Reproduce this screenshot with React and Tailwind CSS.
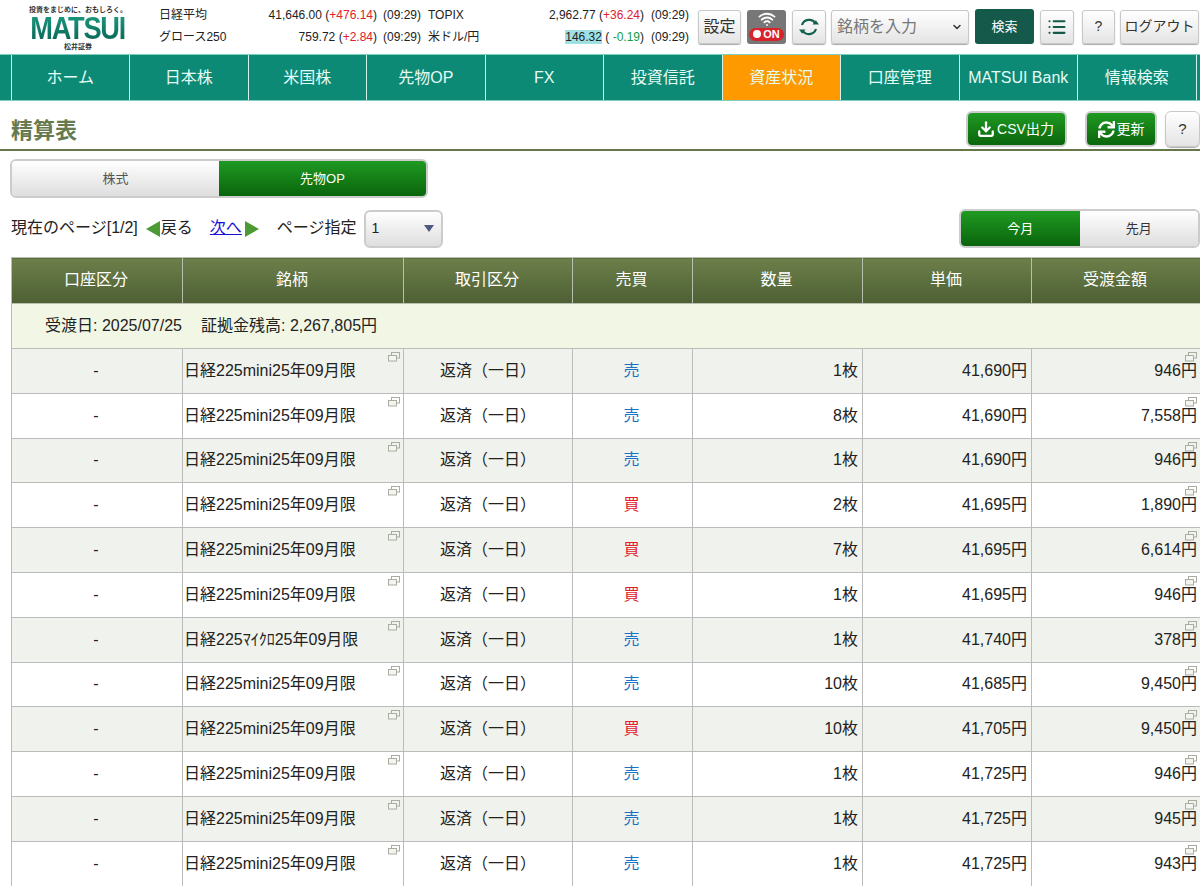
import React from 'react';
import { Download, List, Wifi, ChevronDown } from 'lucide-react';
import { FaSync } from 'react-icons/fa';

const NAV = ['ホーム', '日本株', '米国株', '先物OP', 'FX', '投資信託', '資産状況', '口座管理', 'MATSUI Bank', '情報検索'];

const ROWS = [
    ['日経225mini25年09月限', '売', '1枚', '41,690円', '946円'],
    ['日経225mini25年09月限', '売', '8枚', '41,690円', '7,558円'],
    ['日経225mini25年09月限', '売', '1枚', '41,690円', '946円'],
    ['日経225mini25年09月限', '買', '2枚', '41,695円', '1,890円'],
    ['日経225mini25年09月限', '買', '7枚', '41,695円', '6,614円'],
    ['日経225mini25年09月限', '買', '1枚', '41,695円', '946円'],
    ['日経225ﾏｲｸﾛ25年09月限', '売', '1枚', '41,740円', '378円'],
    ['日経225mini25年09月限', '売', '10枚', '41,685円', '9,450円'],
    ['日経225mini25年09月限', '買', '10枚', '41,705円', '9,450円'],
    ['日経225mini25年09月限', '売', '1枚', '41,725円', '946円'],
    ['日経225mini25年09月限', '売', '1枚', '41,725円', '945円'],
    ['日経225mini25年09月限', '売', '1枚', '41,725円', '943円'],
];

const HEADERS = ['口座区分', '銘柄', '取引区分', '売買', '数量', '単価', '受渡金額'];
const WIDTHS = ['w-[171px]', 'w-[221px]', 'w-[169px]', 'w-[120px]', 'w-[170px]', 'w-[169px]', 'w-[169px]'];

const grayBtn = 'flex items-center justify-center h-[34px] rounded-[3px] border border-[#c8c8c8] bg-gradient-to-b from-white to-[#e4e4e4] shadow-[0_1px_1px_#aaa] text-[#333] whitespace-nowrap';
const greenBtn = 'flex items-center justify-center rounded-[6px] bg-gradient-to-b from-[#1f9a22] to-[#0a650c] text-white';

const WindowIcon = () => (
    <svg className="absolute top-[3px] right-[3px]" width="12" height="10" viewBox="0 0 12 10" fill="none" stroke="#a9ad9f" strokeWidth="1">
        <rect x="3.5" y="0.5" width="8" height="5.5" />
        <rect x="0.5" y="3.5" width="8" height="5.5" fill="#f4f5f0" />
    </svg>
);

const SyncIcon = () => (
    <svg width="22" height="22" viewBox="0 0 22 22" fill="none" stroke="#14604f" strokeWidth="2.2">
        <path d="M4 9a7.5 7.5 0 0 1 13.5-1.5" />
        <path d="M18 13a7.5 7.5 0 0 1-13.5 1.5" />
        <path d="M14.5 8.5h6.5l-3.2-4.2z" fill="#14604f" stroke="none" />
        <path d="M7.5 13.5H1l3.2 4.2z" fill="#14604f" stroke="none" />
    </svg>
);

const Market = ({ label, value, change, up, highlight }) => (
    <>
        <span className="whitespace-nowrap">{label}</span>
        <span className="text-right whitespace-nowrap">
            <span className={highlight ? 'bg-[#9fe0e4]' : ''}>{value}</span>{' '}
            ({up ? <span className="text-[#e0202c]">{change}</span> : <><span> </span><span className="text-[#169c48]">{change}</span></>})
        </span>
        <span className="text-right whitespace-nowrap">(09:29)</span>
    </>
);

export default function App() {
    return (
        <div className="w-[1200px] h-[886px] overflow-hidden bg-white text-[#222] font-['Liberation_Sans','Noto_Sans_CJK_JP',sans-serif]">
            {/* Top bar */}
            <header className="flex h-[54px] items-center">
                <div className="w-[159px] shrink-0 flex flex-col items-center pt-[3px] pr-[3px]">
                    <span className="text-[7px] leading-[8px] font-bold text-[#333] whitespace-nowrap">投資をまじめに、おもしろく。</span>
                    <span className="text-[32px] leading-[28px] font-bold tracking-[-1.5px] scale-x-[.85] bg-gradient-to-b from-[#1a9a7e] to-[#0a6657] bg-clip-text text-transparent">MATSUI</span>
                    <span className="text-[7px] leading-[9px] font-bold text-[#333]">松井証券</span>
                </div>
                <div className="grid grid-cols-[65px_153px_44px] gap-y-[8px] pb-[2px] text-[12px] leading-[14px] w-[262px]">
                    <Market label="日経平均" value="41,646.00" change="+476.14" up />
                    <Market label="グロース250" value="759.72" change="+2.84" up />
                </div>
                <div className="grid grid-cols-[55px_161px_45px] gap-y-[8px] pb-[2px] text-[12px] leading-[14px] ml-[7px] w-[261px]">
                    <Market label="TOPIX" value="2,962.77" change="+36.24" up />
                    <Market label="米ドル/円" value="146.32" change="-0.19" highlight />
                </div>
                <div className="flex items-center ml-[9px] pb-[1px]">
                    <button className={`${grayBtn} w-[43px] text-[16px]`}>設定</button>
                    <div className="relative ml-[6px] w-[39px] h-[34px] rounded-[3px] bg-[#777] flex justify-center">
                        <Wifi size={18} strokeWidth={2.5} className="text-white" />
                        <span className="absolute bottom-[3px] left-[2px] w-[35px] h-[13px] rounded-full bg-[#d8232a] flex items-center justify-center text-white text-[11px] font-bold leading-none">
                            <span className="w-[8px] h-[8px] rounded-full bg-white mr-[2px]"></span>ON
                        </span>
                    </div>
                    <button className={`${grayBtn} ml-[6px] w-[34px]`}>
                        <SyncIcon />
                    </button>
                    <div className={`${grayBtn} ml-[5px] w-[138px] !justify-between pl-[5px] pr-[5px] text-[16px] !text-[#777]`}>
                        <span>銘柄を入力</span>
                        <ChevronDown size={12} strokeWidth={3} className="text-[#333]" />
                    </div>
                    <button className="ml-[6px] w-[59px] h-[35px] rounded-[3px] bg-[#14594a] text-white text-[13px]">検索</button>
                    <button className={`${grayBtn} ml-[6px] w-[34px]`}>
                        <List size={20} strokeWidth={2.5} className="text-[#14594a]" />
                    </button>
                    <button className={`${grayBtn} ml-[8px] w-[33px] text-[14px]`}>?</button>
                    <button className={`${grayBtn} ml-[5px] w-[79px] text-[14px]`}>ログアウト</button>
                </div>
            </header>

            {/* Main nav */}
            <nav className="flex h-[47px] bg-[#0d8a75] border-y border-[#7fcfc0] pl-[10.5px]">
                {NAV.map((item) => (
                    <a
                        key={item}
                        className={`w-[118.5px] flex items-center justify-center border-l border-[#d5efe9] text-[16px] text-[#e4fbf5] whitespace-nowrap ${item === '資産状況' ? 'bg-[#ff9900]' : ''}`}
                    >
                        {item}
                    </a>
                ))}
                <span className="border-l border-[#d5efe9]"></span>
            </nav>

            {/* Page title */}
            <div className="flex h-[50px] items-center border-b-2 border-[#66784a] pl-[11px] pt-[8px]">
                <h1 className="text-[22px] font-bold text-[#667a50] mt-[2px]">精算表</h1>
                <div className="ml-auto flex items-center">
                    <button className={`${greenBtn} w-[101px] h-[36px] border-2 border-[#ccc] text-[14px] gap-[2px] pr-[2px]`}>
                        <Download size={18} strokeWidth={3} />CSV出力
                    </button>
                    <button className={`${greenBtn} ml-[18px] w-[72px] h-[36px] border-2 border-[#ccc] text-[14px] gap-[2px]`}>
                        <FaSync size={17} />更新
                    </button>
                    <button className={`${grayBtn} ml-[8px] w-[35px] !h-[36px] !rounded-[6px] text-[15px]`}>?</button>
                </div>
            </div>

            {/* Product tabs */}
            <div className="flex w-[418px] h-[39px] ml-[10px] mt-[8px] rounded-[6px] border-2 border-[#ccc] overflow-hidden text-[13px]">
                <div className="flex-1 flex items-center justify-center bg-gradient-to-b from-white to-[#dedede] text-[#555]">株式</div>
                <div className="flex-1 flex items-center justify-center bg-gradient-to-b from-[#1f9a22] to-[#0a650c] text-white">先物OP</div>
            </div>

            {/* Paging */}
            <div className="flex items-center h-[39px] mt-[11px] pl-[11px] text-[16px] whitespace-nowrap">
                <span className="mb-[2px]">現在のページ[1/2]</span>
                <span className="ml-[8px] w-0 h-0 border-y-[8px] border-y-transparent border-r-[14px] border-r-[#4c9a34]"></span>
                <span className="ml-[1px] mb-[2px]">戻る</span>
                <a className="ml-[17px] mb-[2px] text-[#1a0dd8] underline">次へ</a>
                <span className="ml-[3px] w-0 h-0 border-y-[8px] border-y-transparent border-l-[14px] border-l-[#4c9a34]"></span>
                <span className="ml-[18px] mb-[2px]">ページ指定</span>
                <div className="ml-[7px] w-[79px] h-[38px] rounded-[6px] border-2 border-[#ccc] bg-gradient-to-b from-white to-[#dedede] flex items-center justify-between pl-[6px] pr-[7px]">
                    <span className="text-[14px]">1</span>
                    <span className="w-0 h-0 border-x-[5px] border-x-transparent border-t-[7px] border-t-[#4d5a80]"></span>
                </div>
                <div className="ml-auto flex w-[241px] h-[39px] rounded-[6px] border-2 border-[#ccc] overflow-hidden text-[13px]">
                    <div className="flex-1 flex items-center justify-center bg-gradient-to-b from-[#1f9a22] to-[#0a650c] text-white">今月</div>
                    <div className="flex-1 flex items-center justify-center bg-gradient-to-b from-white to-[#dedede] text-[#333]">先月</div>
                </div>
            </div>

            {/* Settlement table */}
            <table className="ml-[11px] mt-[9px] w-[1189px] table-fixed border-collapse text-[16px]">
                <thead>
                    <tr className="h-[46px]">
                        {HEADERS.map((h, i) => (
                            <th key={h} className={`${WIDTHS[i]} pr-[2px] pb-[2px] font-normal text-white border border-[#b9bfae] bg-gradient-to-b from-[#6c7f4a] to-[#4e6034]`}>{h}</th>
                        ))}
                    </tr>
                </thead>
                <tbody>
                    <tr className="h-[45px] bg-[#f2f6e4]">
                        <td colSpan={7} className="border border-[#bbb] pl-[33px] whitespace-nowrap">
                            <span>受渡日: 2025/07/25</span>
                            <span className="ml-[19px]">証拠金残高: 2,267,805円</span>
                        </td>
                    </tr>
                    {ROWS.map((r, i) => (
                        <tr key={i} className={`h-[44.8px] ${i % 2 === 0 ? 'bg-[#f0f2ed]' : 'bg-white'}`}>
                            <td className="border border-[#bbb] text-center pr-[2px]">-</td>
                            <td className="relative border border-[#bbb] pl-[1px] whitespace-nowrap">{r[0]}<WindowIcon /></td>
                            <td className="border border-[#bbb] text-center">返済（一日）</td>
                            <td className={`border border-[#bbb] text-center pr-[2px] ${r[1] === '売' ? 'text-[#1a72c4]' : 'text-[#e0202c]'}`}>{r[1]}</td>
                            <td className="border border-[#bbb] text-right pr-[4px]">{r[2]}</td>
                            <td className="border border-[#bbb] text-right pr-[4px]">{r[3]}</td>
                            <td className="relative border border-[#bbb] text-right pr-[3px]">{r[4]}<WindowIcon /></td>
                        </tr>
                    ))}
                </tbody>
            </table>
        </div>
    );
}
